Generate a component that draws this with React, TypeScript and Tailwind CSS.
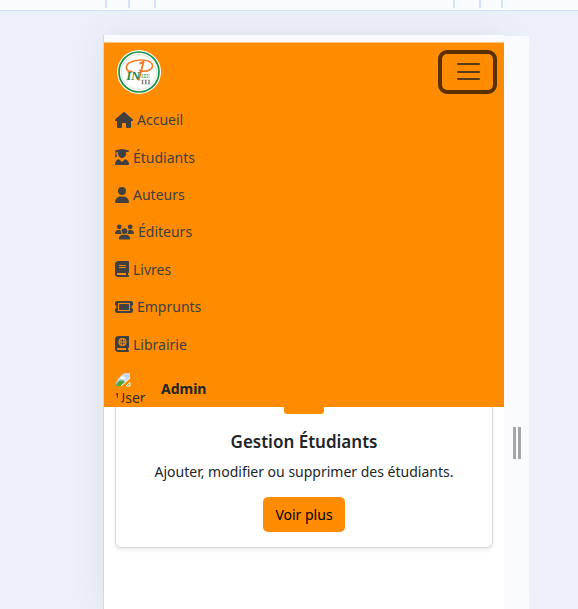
import type { ReactNode } from "react";
import {
  FaBook,
  FaBookAtlas,
  FaHouse,
  FaTicket,
  FaUser,
  FaUserGraduate,
  FaUsers,
} from "react-icons/fa6";

const links: { label: string; icon: ReactNode }[] = [
  { label: "Accueil", icon: <FaHouse className="h-4 w-[18px]" /> },
  { label: "Étudiants", icon: <FaUserGraduate className="h-4 w-3.5" /> },
  { label: "Auteurs", icon: <FaUser className="h-4 w-3.5" /> },
  { label: "Éditeurs", icon: <FaUsers className="h-4 w-[19px]" /> },
  { label: "Livres", icon: <FaBook className="h-4 w-3.5" /> },
  { label: "Emprunts", icon: <FaTicket className="h-4 w-[18px]" /> },
  { label: "Librairie", icon: <FaBookAtlas className="h-4 w-3.5" /> },
];

function Tick({ className = "" }: { className?: string }) {
  return <span className={`h-2 w-[2px] bg-[#d3e3fd] ${className}`} />;
}

function Ruler() {
  return (
    <div className="flex h-[11px] border-b border-[#d3e3fd] bg-[#f9fbff] pr-[75px] pl-[105px]">
      <Tick />
      <Tick className="ml-[21px]" />
      <Tick className="ml-6" />
      <Tick className="ml-auto" />
      <Tick className="ml-6" />
      <Tick className="ml-5" />
    </div>
  );
}

function Logo() {
  return (
    <svg viewBox="0 0 44 44" className="size-11" role="img" aria-label="INP">
      <circle cx="22" cy="22" r="22" fill="#fff" />
      <circle cx="22" cy="22" r="20" fill="none" stroke="#15924a" strokeWidth="1.7" />
      <circle cx="22" cy="22" r="17.6" fill="none" stroke="#c4dec8" strokeWidth="0.7" />
      <path
        d="M15 21.5C8 22 7.500 14.500 14 12C21 9 35 9 35.500 15.500C35.500 20.500 28 22.500 22.500 20.500"
        fill="none"
        stroke="#f47b2a"
        strokeWidth="1.6"
        strokeLinecap="round"
      />
      <path d="M22.500 13.500L26.500 12L21.500 30.500" fill="none" stroke="#f47b2a" strokeWidth="2" strokeLinejoin="round" />
      <text x="9.500" y="30" fontFamily="Liberation Serif, serif" fontSize="12" fontWeight="700" fontStyle="italic" fill="#168344">
        IN
      </text>
      <path d="M24.500 24.700H32.500M24.500 27.200H32.500" stroke="#79b98c" strokeWidth="1.500" strokeDasharray="2 .5" />
      <path d="M25.500 30V34M28.800 30V34M32 30V34" stroke="#767676" strokeWidth="1.300" />
      <path d="M24.300 30H33.200M24.300 34H33.200" stroke="#8b8b8b" strokeWidth=".5" />
    </svg>
  );
}

function UserPicture() {
  return (
    <span className="block h-[34px] w-8 overflow-hidden rounded-[50%] text-[14px] leading-5 text-[#33302b]">
      <svg viewBox="0 0 16 16" className="block size-4" aria-hidden="true">
        <path d="M1 1H15V6L6 14H1Z" fill="#c5d9f7" />
        <path d="M1 13C3 7.500 8 7 10 10.500L6 14H1Z" fill="#50a83b" />
        <path d="M5 6C6 3.500 8 4 9 5C11 5 11 7 9 7H6Z" fill="#fff" />
        <path d="M15 6L6 14" stroke="#fff" strokeWidth="1" />
        <path d="M11 14L15 10.500V14Z" fill="#50a83b" stroke="#fff" strokeWidth="1" />
      </svg>
      User
    </span>
  );
}

function Navbar() {
  return (
    <nav className="border-t border-[#ffc37d] bg-[#ff8c00]">
      <div className="flex h-[58px] items-start justify-between pt-[7px] pr-[7px] pl-[13px]">
        <a href="#accueil">
          <Logo />
        </a>
        <button
          type="button"
          aria-label="Menu"
          aria-expanded="true"
          className="flex h-[44px] w-[59px] items-center justify-center rounded-[9px] border-4 border-[#593100]"
        >
          <svg viewBox="0 0 30 30" className="size-[30px]" fill="none" stroke="#593a16" strokeWidth="2" strokeLinecap="round">
            <path d="M5 7H26M5 15H26M5 22H26" />
          </svg>
        </button>
      </div>
      <ul className="grid h-[262px] grid-rows-7 pl-[11px]">
        {links.map((link) => (
          <li key={link.label} className="flex items-center">
            <a href="#menu" className="flex items-center gap-1 text-[#404040]">
              {link.icon}
              {link.label}
            </a>
          </li>
        ))}
      </ul>
      <div className="flex h-11 items-center gap-3.5 pt-[7px] pl-[11px]">
        <UserPicture />
        <strong className="font-bold">Admin</strong>
      </div>
    </nav>
  );
}

function StudentCard() {
  return (
    <section className="mx-[11px] flex flex-col items-center rounded-b-md border border-t-0 border-[#d8dadc] bg-white pb-[15px] text-center shadow-[0_2px_4px_rgba(0,0,0,0.08)]">
      <div className="h-[7px] w-10 rounded-b-[3px] bg-[#ff8c00]" />
      <h2 className="mt-4 text-[17px] leading-6 font-semibold">Gestion Étudiants</h2>
      <p className="mt-1.5 leading-6">Ajouter, modifier ou supprimer des étudiants.</p>
      <button type="button" className="mt-[13px] h-[35px] rounded-[5px] bg-[#ff8c00] px-3 text-black">
        Voir plus
      </button>
    </section>
  );
}

export default function App() {
  return (
    <div className="flex min-h-screen flex-col overflow-hidden bg-[#ecf0fa] font-['Noto_Sans',sans-serif] text-[14px] text-[#212529]">
      <Ruler />
      <main className="mt-6 mr-[49px] ml-[103px] flex flex-1">
        <div className="min-w-0 flex-1 border-l border-[#d3d7dd] bg-white shadow-[0_0_30px_rgba(60,80,90,0.09)]">
          <div className="h-[7px] bg-[#f9fbff]" />
          <Navbar />
          <StudentCard />
        </div>
        <div
          className="relative mt-px flex w-[25px] justify-center gap-[2px] bg-[#f9fbff] pt-[391px]"
          role="separator"
          aria-orientation="vertical"
        >
          <span className="h-8 w-[3px] bg-[#a5a5a5]" />
          <span className="h-8 w-[3px] bg-[#a5a5a5]" />
        </div>
      </main>
    </div>
  );
}
